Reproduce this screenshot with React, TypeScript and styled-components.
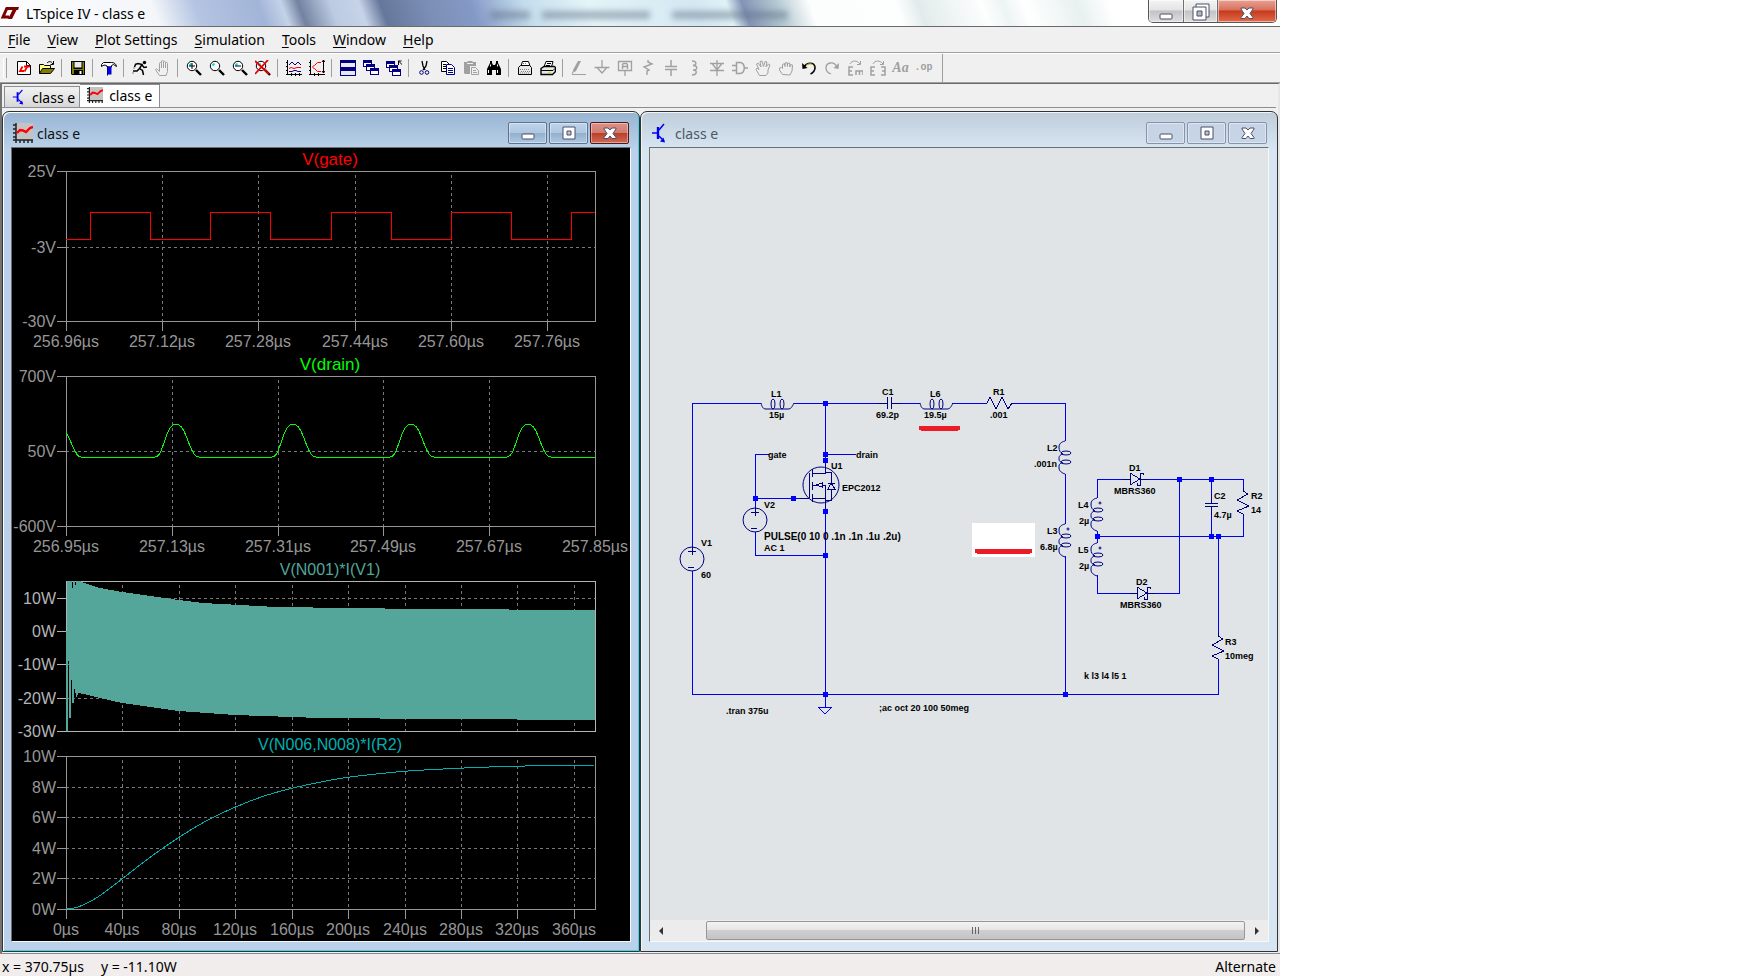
import React from "react";
import styled, { createGlobalStyle, css } from "styled-components";

const GlobalStyle = createGlobalStyle`
  * {
    box-sizing: border-box;
  }
  body {
    margin: 0;
    background: #fff;
    color: #000;
    font-family: "Noto Sans", "Open Sans", sans-serif;
    font-size: 14px;
  }
  button {
    margin: 0;
    padding: 0;
    border: 0;
    background: none;
    color: inherit;
    font: inherit;
  }
  svg {
    display: block;
  }
`;

/* ---------- toolbar icons, 16 x 16 ---------- */

const GREY = "#a0a0a0";
const NAVY = "#000080";

const Lens = ({ children }: { children?: React.ReactNode }) => (
  <>
    <circle cx="6" cy="6" r="4.7" fill="#fff" stroke="#000" />
    <path d="M3.5 5.5 5.5 3.5" stroke="#00e0e0" strokeWidth="2" />
    <path d="M10 10l5 5" stroke="#000" strokeWidth="2.4" />
    {children}
  </>
);

const Window3 = ({ x, y }: { x: number; y: number }) => (
  <>
    <rect x={x} y={y} width="9" height="7" fill={NAVY} />
    <rect x={x + 1} y={y + 3} width="7" height="3" fill="#fff" />
  </>
);

const icons: Record<string, React.ReactNode> = {
  "New Schematic": (
    <>
      <path d="M1.5 1.5h9l4 4v9h-13z" fill="#fff" stroke="#000" />
      <path d="M10.5 1.5v4h4" fill="none" stroke="#000" />
      <path d="M6.500 6.500 4 11h4M8 6.500h6M11 7l-2.500 4.500" fill="none" stroke="#f00" strokeWidth="1.800" />
    </>
  ),
  Open: (
    <>
      <path d="M.5 13.500v-9h4l1 1h6v3" fill="#ffff80" stroke="#000" />
      <path d="M.5 13.500l3-5h12l-4 5z" fill="#808000" stroke="#000" />
      <path d="M8 3c2-2 4-2 6 1M14.500 1v3.500h-3" fill="none" stroke="#000" />
    </>
  ),
  Save: (
    <>
      <path d="M1 1h14v14H2l-1-1z" fill="#000" />
      <path d="M2 2h1.500v7h9V2H14v12h-1v-4H4v4H2z" fill="#808000" />
      <path d="M4.500 2h7v5.500h-7z" fill="#e8e8e8" />
      <path d="M9.500 11h2v3h-2z" fill="#fff" />
    </>
  ),
  "Control Panel": (
    <>
      <path d="M.5 6.500V4.500l2-2h8c3 0 4.500 1.500 5 4l-3-2-2 1v1.500H6V6l-2-1-2 .5z" fill="#fff" stroke="#000" />
      <path d="M6.500 6.500h4v8h-4z" fill="#0000e0" />
      <path d="M6.500 6v9.500" stroke="#000080" />
    </>
  ),
  Run: (
    <>
      <circle cx="12.500" cy="2.500" r="1.700" fill="#000" />
      <path d="M3 4.500l3-1 4 1-2.500 4 3 2 1 4.500M7.500 8.500 5 11H1M10 5l2 2.500 3-.5M3.500 4.500 2.500 7" fill="none" stroke="#000" strokeWidth="1.500" />
      <path d="M0 13h2M1 8h2" stroke="#808080" />
    </>
  ),
  Halt: (
    <path
      d="M4.500 15.500 1 10.500c-1-2 1-2 2-.5l1.500 1.500V3.500c0-1.500 2-1.500 2 0v-2c0-1.500 2-1.500 2 0v2-1c0-1.500 2-1.500 2 0v2-1c0-1.500 2-1.500 2 0v8l-1.500 4zM6.500 3.500V8M8.500 3.500V8M10.500 4.500V8"
      fill="none"
      stroke={GREY}
    />
  ),
  "Zoom In": <Lens><path d="M3 6h6M6 3v6" stroke="#000" /></Lens>,
  "Zoom Area": <Lens />,
  "Zoom Out": <Lens><path d="M3 6h6" stroke="#000" /></Lens>,
  "Zoom Full": <Lens><path d="M0 1l14 13M13 0 0 14" stroke="#e00000" strokeWidth="1.800" /></Lens>,
  "Pick Traces": (
    <>
      <path d="M1.500 0v15M0 14.500h16M0 2.500h2M0 6.500h2M0 10.500h2M5.500 13v3M9.500 13v3M13.500 13v3" stroke="#000" fill="none" />
      <path d="M3 5l3-3 3 3 3-3 3 3" fill="none" stroke={NAVY} />
      <path d="M3 8.500l2-1 3 1 3-1 4 0" fill="none" stroke="#f00" />
      <path d="M3 11.500h3l2-1h2l2 1h3" fill="none" stroke={NAVY} />
    </>
  ),
  Autorange: (
    <>
      <path d="M1.500 0v15M0 14.500h16M0 2.500h2M0 6.500h2M0 10.500h2M5.500 13v3M9.500 13v3M14.500 0v13M13 2l1.500-2L16 2M13 11l1.500 2 1.500-2" stroke="#000" fill="none" />
      <path d="M3.500 6.500l2-1 3-3h3.500M3.500 7.500l2 1 3 3H12" fill="none" stroke="#f00" />
    </>
  ),
  "Tile Windows": (
    <>
      <path d="M0 0h16v16H0z" fill={NAVY} />
      <path d="M1 3h14v4H1zM1 11h14v4H1z" fill="#e8e8f0" />
    </>
  ),
  "Cascade Windows": (
    <>
      <Window3 x={0} y={0} />
      <Window3 x={3} y={4} />
      <Window3 x={7} y={8} />
    </>
  ),
  "Close All": (
    <>
      <Window3 x={0} y={1} />
      <Window3 x={3} y={5} />
      <Window3 x={6} y={9} />
      <path d="M12 1h3.500M12.500 1v4M12.500 1l4 4" stroke="#000" fill="none" />
    </>
  ),
  Cut: (
    <>
      <path d="M5 1l1 5 2 4M10 1 9 6l-3 4" fill="none" stroke="#000" strokeWidth="1.300" />
      <circle cx="4.500" cy="12.500" r="1.800" fill="none" stroke={NAVY} />
      <circle cx="10" cy="12.500" r="1.800" fill="none" stroke={NAVY} />
    </>
  ),
  Copy: (
    <>
      <path d="M1.500 1.500h5l3 3v7h-8z" fill="#fff" stroke="#000" />
      <path d="M3 4.500h3M3 6.500h4M3 8.500h4" stroke="#000" />
      <path d="M6.500 4.500h5l3 3v7h-8z" fill="#fff" stroke={NAVY} />
      <path d="M8 8.500h5M8 10.500h5M8 12.500h5" stroke={NAVY} />
    </>
  ),
  Paste: (
    <>
      <path d="M1 2h3l1-1h4l1 1h3v4H7v8H2l-1-1z" fill={GREY} />
      <path d="M4 3.500h6" stroke="#efefef" />
      <path d="M8.500 7.500h4l3 3v4h-7z" fill="#efefef" stroke={GREY} />
      <path d="M10 10.500h3M10 12.500h4" stroke={GREY} />
    </>
  ),
  Find: (
    <>
      <path d="M4 1h2v2l1 2h2l1-2V1h2v2l3 6v6h-5v-5H6v5H1V9l3-6z" fill="#000" />
      <path d="M2.500 10v3M4.500 4.500v2M11.500 10v3M11.500 4.500v2" stroke="#fff" />
    </>
  ),
  "Print Setup": (
    <>
      <path d="M4 6l1.500-4.500h6L13 6" fill="#fff" stroke="#000" />
      <path d="M1.500 7.500l2-2h9l2 2v7h-13z" fill="#e8e8e8" stroke="#000" />
      <path d="M6 3.500h4M3 9.500h10M4 11.500h9M3 13h10" stroke="#808080" strokeDasharray="1 1" />
    </>
  ),
  Print: (
    <>
      <path d="M4 7l2-5.500h7L11.500 7" fill="#fff" stroke="#000" />
      <path d="M1 8.500l3-2h10l1.500 1v4l-3 3H1z" fill="#e8e8e8" stroke="#000" strokeWidth="1.400" />
      <path d="M7 3.500h4M6 5.500h4M1 10.500h12l2-2" stroke="#000" fill="none" />
      <path d="M8 12.500h3" stroke="#e0e000" strokeWidth="1.500" />
    </>
  ),
  Wire: (
    <>
      <path d="M7 1h3L5 11l-2.500 1.500L2 10z" fill={GREY} />
      <path d="M1 14.500h14M1 14l1.500-3" stroke={GREY} />
    </>
  ),
  Ground: <path d="M8 0v7.500M.5 7.500h15M3.500 8l4.500 5 4.500-5" fill="none" stroke={GREY} strokeWidth="1.300" />,
  "Label Net": (
    <>
      <path d="M1.500 1.500h13v9h-13zM8 10.500V16" fill="none" stroke={GREY} strokeWidth="1.300" />
      <path d="M5.500 9V4.500l1-1h3l1 1V9M5.500 6.500h5" fill="none" stroke={GREY} strokeWidth="1.400" />
    </>
  ),
  Resistor: <path d="M8 0v2l4 2-8 3 5 3-2 1v4" fill="none" stroke={GREY} strokeWidth="1.400" />,
  Capacitor: <path d="M8 0v6M8 10v6M2 6.500h12M2 9.500h12" fill="none" stroke={GREY} strokeWidth="1.500" />,
  Inductor: <path d="M6 1c5 0 5 4 1 4.500 5 0 5 4.500 0 4.500 5 0 4 5-1 5" fill="none" stroke={GREY} strokeWidth="1.400" />,
  Diode: <path d="M8 0v16M1 3.500h14M3.500 4l4.500 6 4.500-6M1 10.500h14" fill="none" stroke={GREY} strokeWidth="1.300" />,
  Component: <path d="M4.500 2.500h4c5 1 5 10 0 11h-4zM0 5.500h4M0 10.500h4M12 8h4" fill="none" stroke={GREY} strokeWidth="1.500" />,
  Move: (
    <path
      d="M4.500 15.500 1 9.500 2 8l2 1.500L1.500 4 3 3l3 4L5 1.500 7 1l1.500 5.500L10 1.500l2 .5-1 5 2.500-3L15 5l-2 5v3l-2 2.500z"
      fill="none"
      stroke={GREY}
    />
  ),
  Drag: (
    <path
      d="M4.500 14.500 1.500 10V8l2-.5 1 1V4.500l2-1 .5 3V3l2-.5.5 4V3.500l2-.5.5 4 .5-2.500 2 .5-.5 6-2 4z"
      fill="none"
      stroke={GREY}
    />
  ),
  Undo: (
    <>
      <path d="M3 7c3-5 10-5 11 0 .5 3-2 6-4.500 7" fill="none" stroke="#000" strokeWidth="1.600" />
      <path d="M5 5.500c3-3 7-2 8 1" fill="none" stroke="#c0b000" />
      <path d="M1 3l.5 6 5-1z" fill="#000" />
    </>
  ),
  Redo: (
    <>
      <path d="M13 7C10 1 2 2 2 8c0 3 2 5 5 6" fill="none" stroke={GREY} strokeWidth="1.300" />
      <path d="M15 3l-.5 6-5-1z" fill={GREY} />
    </>
  ),
  Rotate: (
    <>
      <path d="M6 7H2v8h4M2 11h3M9 15v-4h7v4M12.500 11v4" fill="none" stroke={GREY} strokeWidth="1.500" />
      <path d="M3 4c2-4 7-4 10 0M13.500 1v3.500H10" fill="none" stroke={GREY} />
    </>
  ),
  Mirror: (
    <>
      <path d="M5 7H1v8h4M1 11h3M11 7h4v8h-4M15 11h-3" fill="none" stroke={GREY} strokeWidth="1.500" />
      <path d="M3 4c2-4 7-4 10 0M13.500 1v3.500H10" fill="none" stroke={GREY} />
    </>
  ),
};

const toolGroups = [
  ["New Schematic", "Open"],
  ["Save"],
  ["Control Panel"],
  ["Run", "Halt"],
  ["Zoom In", "Zoom Area", "Zoom Out", "Zoom Full"],
  ["Pick Traces", "Autorange"],
  ["Tile Windows", "Cascade Windows", "Close All"],
  ["Cut", "Copy", "Paste", "Find"],
  ["Print Setup", "Print"],
  [
    "Wire", "Ground", "Label Net", "Resistor", "Capacitor", "Inductor", "Diode", "Component",
    "Move", "Drag", "Undo", "Redo", "Rotate", "Mirror", "Text", "SPICE Directive",
  ],
];

const PlotIcon = ({ size }: { size: number }) => (
  <svg width={size} height={size} viewBox="0 0 20 20">
    <path d="M3 0h17v17H3z" fill="#c3c3c3" />
    <path d="M3 0v20M0 17h20M0 2h3M0 6h3M0 10h3M0 14h3M7 17v3M11 17v3M15 17v3M19 17v3" stroke="#222" strokeWidth="1.500" fill="none" />
    <path d="M4 10l3-3 3 .5 3 1.500 4-4 3-1" fill="none" stroke="#f00" strokeWidth="2.400" />
  </svg>
);

const TransistorIcon = ({ size }: { size: number }) => (
  <svg width={size} height={size} viewBox="0 0 20 20">
    <path d="M1 10h6M13 1l-5 6M8 13l5 5" stroke="#0000f0" strokeWidth="1.500" />
    <path d="M7 4v12" stroke="#0000f0" strokeWidth="2.400" />
    <path d="M14 19.500l-5-1 3.500-4z" fill="#0000f0" />
  </svg>
);

const MinimizeGlyph = () => (
  <svg width="14" height="18" viewBox="0 0 14 18">
    <rect x="1" y="10" width="12" height="5" rx="1" fill="#fff" stroke="#4b5068" />
  </svg>
);
const MaximizeGlyph = () => (
  <svg width="14" height="18" viewBox="0 0 14 18">
    <path d="M1 3h12v12H1z" fill="#fff" stroke="#4b5068" />
    <path d="M5 7h4v4H5z" fill="#b8c4d8" stroke="#4b5068" />
  </svg>
);
const RestoreGlyph = () => (
  <svg width="20" height="20" viewBox="0 0 20 20">
    <path d="M5 1h13v13H5z" fill="#fff" stroke="#4b5068" />
    <path d="M2 4h13v13H2z" fill="#fff" stroke="#4b5068" />
    <path d="M6 8h5v5H6z" fill="#b8b8b8" stroke="#4b5068" />
  </svg>
);
const CloseGlyph = () => (
  <svg width="16" height="18" viewBox="0 0 16 18">
    <path
      d="M2 4h4l2 2 2-2h4v1l-3 4.500 3 4v1h-4l-2-2.500-2 2.500H2v-1l3-4L2 5z"
      fill="#fff"
      stroke="#4b5068"
      strokeLinejoin="round"
    />
  </svg>
);

/* ---------- waveform panes ---------- */

const LEFT = 66;
const RIGHT = 595;

type Tick = [number, string];

interface PaneProps {
  title: string;
  color: string;
  titleSize?: number;
  top: number;
  bottom: number;
  axis?: string;
  yTicks: Tick[];
  xLines: number[];
  xTicks?: Tick[];
  children: React.ReactNode;
}

const Pane = ({
  title,
  color,
  titleSize = 16,
  top,
  bottom,
  axis = "#969696",
  yTicks,
  xLines,
  xTicks = [],
  children,
}: PaneProps) => (
  <g>
    <g stroke="#787878" strokeDasharray="3 3">
      {xLines.map((x) => (
        <path key={x} d={`M${x} ${top + 4}V${bottom}`} />
      ))}
      {yTicks.slice(1, -1).map(([y]) => (
        <path key={y} d={`M${LEFT} ${y}H${RIGHT}`} />
      ))}
    </g>
    <g stroke={axis} fill="none">
      <path d={`M${LEFT} ${top}H${RIGHT}V${bottom}H${LEFT}z`} />
      {yTicks.map(([y, label]) => label && <path key={y} d={`M57 ${y}H${LEFT}`} />)}
      {xTicks.map(([x]) => (
        <path key={x} d={`M${x} ${bottom}v10`} />
      ))}
    </g>
    {children}
    {yTicks.map(([y, label]) => (
      <AxisText key={y} x="56" y={y + 6} textAnchor="end" fill={axis}>
        {label}
      </AxisText>
    ))}
    {xTicks.map(([x, label]) => (
      <AxisText key={x} x={x} y={bottom + 26} textAnchor="middle" fill={axis}>
        {label}
      </AxisText>
    ))}
    <TraceTitle x="330" y={top - 6} textAnchor="middle" fill={color} $size={titleSize}>
      {title}
    </TraceTitle>
  </g>
);

const drainPulse = (peak: number) =>
  `H${peak - 21}C${peak - 12} 457 ${peak - 11} 424 ${peak} 424C${peak + 11} 424 ${peak + 13} 457 ${peak + 23} 457`;

const timeLines = [122, 179, 235, 292, 348, 405, 461, 517, 574];

const outputPower = [
  [66, 909], [72, 909], [84, 905], [100, 896], [122, 879], [150, 857], [179, 837], [207, 820],
  [235, 807], [263, 796], [292, 788], [320, 782], [348, 777], [376, 774], [405, 771], [461, 768],
  [517, 766], [595, 765],
];

/* rounds the corners of a polyline by curving between segment midpoints */
const smooth = (points: number[][]) => {
  const [first, ...rest] = points;
  const last = rest[rest.length - 1];
  const curves = rest.slice(0, -1).map(([x, y], i) => {
    const [nx, ny] = rest[i + 1];
    return `Q${x} ${y} ${(x + nx) / 2} ${(y + ny) / 2}`;
  });
  return `M${first.join(" ")}${curves.join("")}L${last.join(" ")}`;
};

const Waveforms = () => (
  <Drawing viewBox="12 148 618 793" preserveAspectRatio="xMinYMin meet" role="img" aria-label="Simulation waveforms">
    <Pane
      title="V(gate)"
      color="#f00"
      titleSize={17}
      top={171}
      bottom={321}
      yTicks={[[171, "25V"], [247, "-3V"], [321, "-30V"]]}
      xLines={[162, 258, 355, 451, 547]}
      xTicks={[
        [66, "256.96µs"], [162, "257.12µs"], [258, "257.28µs"],
        [355, "257.44µs"], [451, "257.60µs"], [547, "257.76µs"],
      ]}
    >
      <path
        d="M66 239H90V212H150V239H210V212H270V239H331V212H391V239H451V212H511V239H571V212H595"
        fill="none"
        stroke="#f00"
      />
    </Pane>
    <Pane
      title="V(drain)"
      color="#0f0"
      titleSize={17}
      top={376}
      bottom={526}
      yTicks={[[376, "700V"], [451, "50V"], [526, "-600V"]]}
      xLines={[172, 278, 383, 489]}
      xTicks={[
        [66, "256.95µs"], [172, "257.13µs"], [278, "257.31µs"],
        [383, "257.49µs"], [489, "257.67µs"], [595, "257.85µs"],
      ]}
    >
      <path
        d={`M66 432C71 440 75 457 81 457${[176, 293, 411, 528].map(drainPulse).join("")}H595`}
        fill="none"
        stroke="#0f0"
      />
    </Pane>
    <Pane
      title="V(N001)*I(V1)"
      color="#53a699"
      top={581}
      bottom={731}
      axis="#b4b4b4"
      yTicks={[[581, ""], [598, "10W"], [631, "0W"], [664, "-10W"], [698, "-20W"], [731, "-30W"]]}
      xLines={timeLines}
    >
      <path
        d="M66 581H72V588H73V581H75V585H76V581H80L84 583 100 588 122 592 150 596 179 600 203 603 240 605
          276 607 350 608 420 609 595 610V720L440 719 320 718 292 717 235 715 179 711 150 707 122 703 100 698
          84 694 78 693 77 697H76L75 689H74V703H72V680H71V718H69V661H68V731H66z"
        fill="#53a699"
      />
      <path d="M66 581V631" stroke="#b4b4b4" />
    </Pane>
    <Pane
      title="V(N006,N008)*I(R2)"
      color="#00b0b0"
      top={756}
      bottom={909}
      yTicks={[[756, "10W"], [787, "8W"], [817, "6W"], [848, "4W"], [878, "2W"], [909, "0W"]]}
      xLines={timeLines}
      xTicks={["0µs", "40µs", "80µs", "120µs", "160µs", "200µs", "240µs", "280µs", "320µs", "360µs"].map(
        (label, i): Tick => [[66, ...timeLines][i], label]
      )}
    >
      <path d={smooth(outputPower)} fill="none" stroke="#00b0b0" />
    </Pane>
  </Drawing>
);

/* ---------- schematic ---------- */

const junctions = [
  [825, 403], [825, 454], [825, 460], [825, 511], [825, 555], [825, 694], [755, 498], [793, 498],
  [1065, 694], [1179, 479], [1211, 479], [1211, 536], [1218, 536], [1097, 536],
];

const notes: [number, number, string][] = [
  [771, 397, "L1"], [769, 418, "15µ"], [882, 395, "C1"], [876, 418, "69.2p"],
  [930, 397, "L6"], [924, 418, "19.5µ"], [993, 395, "R1"], [990, 418, ".001"],
  [1047, 451, "L2"], [1034, 467, ".001n"], [1047, 534, "L3"], [1040, 550, "6.8µ"],
  [1078, 508, "L4"], [1079, 524, "2µ"], [1078, 553, "L5"], [1079, 569, "2µ"],
  [1129, 471, "D1"], [1114, 494, "MBRS360"], [1136, 585, "D2"], [1120, 608, "MBRS360"],
  [1214, 499, "C2"], [1214, 518, "4.7µ"], [1251, 499, "R2"], [1251, 513, "14"],
  [1225, 645, "R3"], [1225, 659, "10meg"], [701, 546, "V1"], [701, 578, "60"],
  [764, 508, "V2"], [764, 540, "PULSE(0 10 0 .1n .1n .1u .2u)"], [764, 551, "AC 1"],
  [768, 458, "gate"], [856, 458, "drain"], [831, 469, "U1"], [842, 491, "EPC2012"],
  [726, 714, ".tran 375u"], [879, 711, ";ac oct 20 100 50meg"], [1084, 679, "k l3 l4 l5 1"],
];

const CoilH = ({ x }: { x: number }) => (
  <g transform={`translate(${x} 403)`} shapeRendering="auto">
    <path d="M0 0c1 4 2 6 5 6h22c3 0 4-2 6-6" />
    <ellipse cx="12" cy="1" rx="2" ry="5" />
    <ellipse cx="21" cy="1" rx="2" ry="5" />
  </g>
);

const CoilV = ({ x, y, dot }: { x: number; y: number; dot?: boolean }) => (
  <g transform={`translate(${x} ${y})`} shapeRendering="auto">
    <path d="M0 0c-4 1-6 3-6 6 0 4 1 5 4 7-4 1-4 3-4 5s1 3 4 4c-4 0-4 2-4 5 0 3 3 5 6 6" />
    <ellipse cx="1" cy="12" rx="5" ry="2" />
    <ellipse cx="1" cy="21" rx="5" ry="2" />
    {dot && <circle cx="3" cy="5" r="1" />}
  </g>
);

const ZigzagV = ({ x, y }: { x: number; y: number }) => (
  <path d="M0 0v3l5 3-11 6 12 6-12 5 6 3v2" transform={`translate(${x} ${y})`} />
);

const Schottky = ({ x, y }: { x: number; y: number }) => (
  <g transform={`translate(${x} ${y})`}>
    <path d="M-7 0h7M0-6V6L10 0zM10 0h8M13-4v-2h-3V6H7V4" />
  </g>
);

const Source = ({ x, y }: { x: number; y: number }) => (
  <g transform={`translate(${x} ${y})`}>
    <circle r="12" shapeRendering="auto" />
    <path d="M0-12v8M-4-8h8M-4 8h6" />
  </g>
);

const Schematic = () => (
  <Drawing viewBox="650 148 618 772" preserveAspectRatio="xMinYMin meet" role="img" aria-label="class e schematic">
    <path d="M972 523h63v34h-63z" fill="#fff" />
    <g fill="none" stroke="#0000f0">
      <path d="M761 403H692V547M692 571V694H1218V660M794 403H877M901 403H920M952 403H986M1013 403H1065V441" />
      <path d="M825 403V460M825 511V707M755 508V454H769M755 532V555H825M755 498H800M825 454H856" />
      <path d="M818 707H832L825 714z" />
      <path d="M1065 474V524M1065 556V694M1218 634V536M1097 498V479H1125M1147 479H1243V489M1243 515V536H1097" />
      <path d="M1097 531V543M1097 575V593H1130M1153 593H1179V479M1211 479V494M1211 515V536" />
    </g>
    <g fill="none" stroke={NAVY}>
      <CoilH x={761} />
      <CoilH x={920} />
      <path d="M877 403H887M887 397V409M891 397V409M891 403H901" />
      <path d="M986 403h1l3-6 6 12 6-12 6 12 4-6h2" />
      <CoilV x={1065} y={441} />
      <CoilV x={1065} y={524} dot />
      <CoilV x={1097} y={498} dot />
      <CoilV x={1097} y={543} dot />
      <ZigzagV x={1243} y={488} />
      <ZigzagV x={1218} y={633} />
      <Schottky x={1130} y={479} />
      <Schottky x={1137} y={593} />
      <path d="M1211 494V503M1205 503H1218M1205 506H1218M1211 506V515" />
      <Source x={692} y={559} />
      <Source x={755} y={520} />
      <circle cx="821" cy="485" r="18" shapeRendering="auto" />
      <path d="M800 498H809M809 473V498M812 469V477M812 482V490M812 494V502" />
      <path d="M825 460V473H812M812 485H816L822 483V487L816 485M822 485H825V511M812 498H825" />
      <path d="M825 472H831V483M828 483H835M831 483L828 489H835zM831 489V500H825" />
    </g>
    <g fill="#00f">
      {junctions.map(([x, y]) => (
        <rect key={`${x}-${y}`} x={x - 2} y={y - 2} width="5" height="5" />
      ))}
    </g>
    {notes.map(([x, y, text]) => (
      <NoteText key={`${x}-${y}`} x={x} y={y} $wide={text.startsWith("PULSE")}>
        {text}
      </NoteText>
    ))}
    <g stroke="#ed1c24" strokeWidth="5" strokeLinecap="round">
      <path d="M921 428H958M977 551H1030" />
    </g>
  </Drawing>
);

/* ---------- windows ---------- */

interface ChildWindowProps {
  icon: React.ReactNode;
  active?: boolean;
  children: React.ReactNode;
}

const ChildWindow = ({ icon, active = false, children }: ChildWindowProps) => (
  <StyledWindow $active={active}>
    <WindowHeader>
      {icon}
      <WindowTitle $active={active}>class e</WindowTitle>
      <WindowButton $active={active} aria-label="Minimize">
        <MinimizeGlyph />
      </WindowButton>
      <WindowButton $active={active} aria-label="Maximize">
        <MaximizeGlyph />
      </WindowButton>
      <WindowButton $active={active} $danger aria-label="Close">
        <CloseGlyph />
      </WindowButton>
    </WindowHeader>
    <Client>{children}</Client>
  </StyledWindow>
);

const menus = ["File", "View", "Plot Settings", "Simulation", "Tools", "Window", "Help"];

const App = () => {
  return (
    <Page>
      <GlobalStyle />
      <Frame>
        <TitleBar>
          <Ghost $left={490} $width={40} />
          <Ghost $left={542} $width={108} />
          <Ghost $left={672} $width={116} />
          <svg width="20" height="14" viewBox="0 0 20 14">
            <path d="M7 2 3 11h6" fill="none" stroke="#7b0000" strokeWidth="3" />
            <path d="M6 1h13l-1 3H5zM13 3h4l-5 10H8z" fill="#7b0000" />
          </svg>
          <h1>LTspice IV - class e</h1>
          <Caption>
            <CaptionButton aria-label="Minimize">
              <MinimizeGlyph />
            </CaptionButton>
            <CaptionButton aria-label="Restore">
              <RestoreGlyph />
            </CaptionButton>
            <CaptionButton $danger aria-label="Close">
              <CloseGlyph />
            </CaptionButton>
          </Caption>
        </TitleBar>
        <MenuBar>
          {menus.map((name) => (
            <button key={name}>
              <u>{name[0]}</u>
              {name.slice(1)}
            </button>
          ))}
        </MenuBar>
        <ToolBar>
          {toolGroups.map((group) => (
            <ToolGroup key={group[0]}>
              {group.map((name) => (
                <ToolButton key={name} aria-label={name}>
                  {name === "Text" && <TextGlyph>Aa</TextGlyph>}
                  {name === "SPICE Directive" && <OpGlyph>.op</OpGlyph>}
                  {icons[name] && (
                    <svg width="16" height="16" viewBox="0 0 16 16">
                      {icons[name]}
                    </svg>
                  )}
                </ToolButton>
              ))}
            </ToolGroup>
          ))}
        </ToolBar>
        <Workspace>
          <Tabs role="tablist">
            <Tab role="tab" aria-selected={false}>
              <TransistorIcon size={16} />
              class e
            </Tab>
            <Tab role="tab" aria-selected $active>
              <PlotIcon size={16} />
              class e
            </Tab>
          </Tabs>
          <Mdi>
            <ChildWindow active icon={<PlotIcon size={20} />}>
              <PlotArea>
                <Waveforms />
              </PlotArea>
            </ChildWindow>
            <ChildWindow icon={<TransistorIcon size={20} />}>
              <SchematicArea>
                <Schematic />
              </SchematicArea>
              <ScrollBar>
                <ScrollButton aria-label="Scroll left">
                  <svg width="6" height="8" viewBox="0 0 6 8">
                    <path d="M5 0v8L1 4z" fill="#333" />
                  </svg>
                </ScrollButton>
                <ScrollTrack>
                  <ScrollThumb>
                    <i />
                    <i />
                    <i />
                  </ScrollThumb>
                </ScrollTrack>
                <ScrollButton aria-label="Scroll right">
                  <svg width="6" height="8" viewBox="0 0 6 8">
                    <path d="M1 0v8l4-4z" fill="#333" />
                  </svg>
                </ScrollButton>
              </ScrollBar>
            </ChildWindow>
          </Mdi>
        </Workspace>
        <StatusBar>
          <span>x = 370.75µs</span>
          <span>y = -11.10W</span>
          <span>Alternate</span>
        </StatusBar>
      </Frame>
    </Page>
  );
};

export default App;

const Page = styled.div`
  display: grid;
  grid-template-columns: 320fr 119fr;
  min-height: 100vh;
`;

const Frame = styled.main`
  display: flex;
  flex-direction: column;
  min-width: 0;
  background: #f0f0f0;
`;

const TitleBar = styled.header`
  position: relative;
  display: flex;
  align-items: flex-start;
  height: 27px;
  border-bottom: 1px solid #6a6a6a;
  background: linear-gradient(
    70deg,
    #fdfdfe 0,
    #f4f6fa 150px,
    #b4c4e2 190px,
    #a2b4d8 250px,
    #c4d2e8 272px,
    #7482a2 288px,
    #bccbe2 318px,
    #c6d3e8 345px,
    #66779b 365px,
    #7c8fb6 410px,
    #8499c6 450px,
    #c4dcec 500px,
    #e4f4f8 560px,
    #d4e8f2 660px,
    #e0f2f6 690px,
    #8294b6 705px,
    #b4cad2 738px,
    #fcfdfd 768px,
    #fdfefe 850px,
    #e2ebeb 870px,
    #fdfefe 930px,
    #edf4f4 950px,
    #fff 970px,
    #e8f0f0 1020px,
    #fff 1050px
  );
  svg:first-of-type {
    margin-top: 6px;
  }
  h1 {
    margin: 0 0 0 6px;
    font-size: 14px;
    line-height: 27px;
    font-weight: 400;
  }
`;

/* smudge of the window title showing through the glass */
const Ghost = styled.i<{ $left: number; $width: number }>`
  position: absolute;
  left: ${({ $left }) => $left}px;
  top: 11px;
  width: ${({ $width }) => $width}px;
  height: 8px;
  background: #5f6f86;
  opacity: 0.5;
  filter: blur(3px);
`;

const Caption = styled.div`
  display: flex;
  height: 23px;
  margin: 0 3px 0 auto;
  overflow: hidden;
  border: 1px solid #55565c;
  border-top: 0;
  border-radius: 0 0 5px 5px;
  svg {
    margin: 0 0 3px;
  }
`;

const CaptionButton = styled.button<{ $danger?: boolean }>`
  display: flex;
  align-items: center;
  justify-content: center;
  width: ${({ $danger }) => ($danger ? 59 : 34)}px;
  background: ${({ $danger }) =>
    $danger
      ? "linear-gradient(#e9a295, #d9705c 45%, #c33a1c 50%, #e4694a)"
      : "linear-gradient(#f4f4f4, #e4e4e4 45%, #c3c3c5 50%, #dedede)"};
  box-shadow: inset 0 0 0 1px rgba(255, 255, 255, 0.5);
  & + & {
    border-left: 1px solid #6d6d74;
  }
`;

const MenuBar = styled.nav`
  display: flex;
  gap: 1px;
  height: 26px;
  border-bottom: 1px solid #a0a0a0;
  button {
    padding: 0 8px;
    line-height: 25px;
  }
  u {
    text-underline-offset: 2px;
  }
`;

const ToolBar = styled.div`
  display: flex;
  height: 30px;
  border-top: 1px solid #fff;
  border-bottom: 1px solid #a0a0a0;
  &::before {
    content: "";
    width: 2px;
    margin: 4px 5px 4px 3px;
    border-right: 1px solid #a0a0a0;
    border-left: 1px solid #fff;
  }
`;

const ToolGroup = styled.div`
  display: flex;
  align-items: center;
  padding-bottom: 1px;
  &::after {
    content: "";
    width: 1px;
    height: 18px;
    margin: 0 4px 0 3px;
    background: #a0a0a0;
  }
  &:last-child::after {
    height: 28px;
    margin-left: 7px;
  }
`;

const ToolButton = styled.button`
  display: flex;
  align-items: center;
  justify-content: center;
  width: 23px;
  height: 24px;
`;

const TextGlyph = styled.span`
  color: #a0a0a0;
  font: italic bold 14px "Liberation Serif", serif;
`;

const OpGlyph = styled.span`
  color: #a0a0a0;
  font: bold 10px "Liberation Mono", monospace;
`;

const Workspace = styled.div`
  display: flex;
  flex: 1;
  flex-direction: column;
  border-top: 1px solid #696969;
  border-right: 2px solid #e6e6e6;
  border-left: 2px solid #747474;
`;

const Tabs = styled.div`
  display: flex;
  align-items: flex-end;
  height: 24px;
  margin-right: 2px;
  padding-left: 2px;
  border-bottom: 1px solid #8c8c94;
`;

const Tab = styled.button<{ $active?: boolean }>`
  display: flex;
  align-items: center;
  gap: 4px;
  height: 21px;
  padding: 0 4px 0 7px;
  border: 1px solid #8c8c94;
  border-bottom: 0;
  background: linear-gradient(#f2f2f2, #e6e6e6 50%, #d6d6d6);
  ${({ $active }) =>
    $active &&
    css`
      gap: 6px;
      height: 23px;
      padding: 0 7px 2px;
      border-left: 0;
      background: #fff;
    `}
`;

const Mdi = styled.div`
  display: grid;
  flex: 1;
  grid-template-columns: 1fr 1fr;
  padding: 3px 0 1px;
`;

const StyledWindow = styled.section<{ $active: boolean }>`
  display: flex;
  flex-direction: column;
  min-width: 0;
  padding: 0 8px 9px;
  border: 1px solid #333;
  border-radius: 7px 7px 0 0;
  ${({ $active }) =>
    $active
      ? css`
          background: linear-gradient(#98b4d2, #b9d1ea 36px);
          box-shadow: inset 1px 1px #fff, inset -1px -1px #3fd4ee;
        `
      : css`
          background: linear-gradient(#bfcddb, #d7e4f2 36px);
          box-shadow: inset 1px 1px #f0f5fa;
        `}
`;

const WindowHeader = styled.header`
  display: flex;
  align-items: center;
  gap: 2px;
  height: 35px;
  padding: 7px 2px 0;
`;

const WindowTitle = styled.h2<{ $active: boolean }>`
  flex: 1;
  margin: 0 0 0 2px;
  color: ${({ $active }) => ($active ? "#111" : "#4c5866")};
  font-size: 14px;
  font-weight: 400;
`;

const WindowButton = styled.button<{ $active: boolean; $danger?: boolean }>`
  display: flex;
  align-items: center;
  justify-content: center;
  width: 39px;
  height: 22px;
  border: 1px solid ${({ $active }) => ($active ? "#5c7291" : "#8593ae")};
  border-radius: 2px;
  background: ${({ $active }) =>
    $active ? "linear-gradient(#c0d4ea, #afc7e0 48%, #93aecb 50%, #aec8e2)" : "#c6d4e5"};
  box-shadow: inset 0 0 0 1px rgba(255, 255, 255, 0.4);
  ${({ $active, $danger }) =>
    $active &&
    $danger &&
    css`
      border-color: #52191c;
      background: linear-gradient(#dd9187, #d17c70 48%, #ba3e27 50%, #cf6a56);
    `}
`;

const Client = styled.div`
  display: flex;
  flex: 1;
  flex-direction: column;
  border: 1px solid;
  border-color: #6d6d6d #f8f8f8 #f8f8f8 #6d6d6d;
`;

const Drawing = styled.svg`
  width: 100%;
  height: auto;
  shape-rendering: crispEdges;
`;

const PlotArea = styled.div`
  flex: 1;
  background: #000;
`;

const SchematicArea = styled.div`
  flex: 1;
  background: #e0e4e7;
`;

const AxisText = styled.text`
  font-family: "Liberation Sans", Arial, sans-serif;
  font-size: 16px;
`;

const TraceTitle = styled.text<{ $size: number }>`
  font-family: "Liberation Sans", Arial, sans-serif;
  font-size: ${({ $size }) => $size}px;
`;

const NoteText = styled.text<{ $wide: boolean }>`
  font-family: "Liberation Sans", Arial, sans-serif;
  font-size: ${({ $wide }) => ($wide ? 10 : 9)}px;
  font-weight: 700;
  fill: #000;
`;

const ScrollBar = styled.div`
  display: flex;
  height: 21px;
  padding: 1px 0;
  background: #ececec;
`;

const ScrollButton = styled.button`
  display: flex;
  align-items: center;
  justify-content: center;
  width: 22px;
`;

const ScrollTrack = styled.div`
  flex: 1;
  padding: 0 1px 0 34px;
`;

const ScrollThumb = styled.div`
  display: flex;
  align-items: center;
  justify-content: center;
  gap: 2px;
  height: 19px;
  border: 1px solid #979797;
  border-radius: 2px;
  background: linear-gradient(#f3f3f3, #e6e6e6 45%, #cfcfd1 50%, #c4c4c6);
  i {
    width: 1px;
    height: 7px;
    background: #666;
  }
`;

const StatusBar = styled.footer`
  display: flex;
  gap: 17px;
  height: 23px;
  padding: 0 4px 0 2px;
  border-top: 1px solid #8a8a8a;
  background: #f1edec;
  line-height: 25px;
  span:last-child {
    margin-left: auto;
  }
`;
